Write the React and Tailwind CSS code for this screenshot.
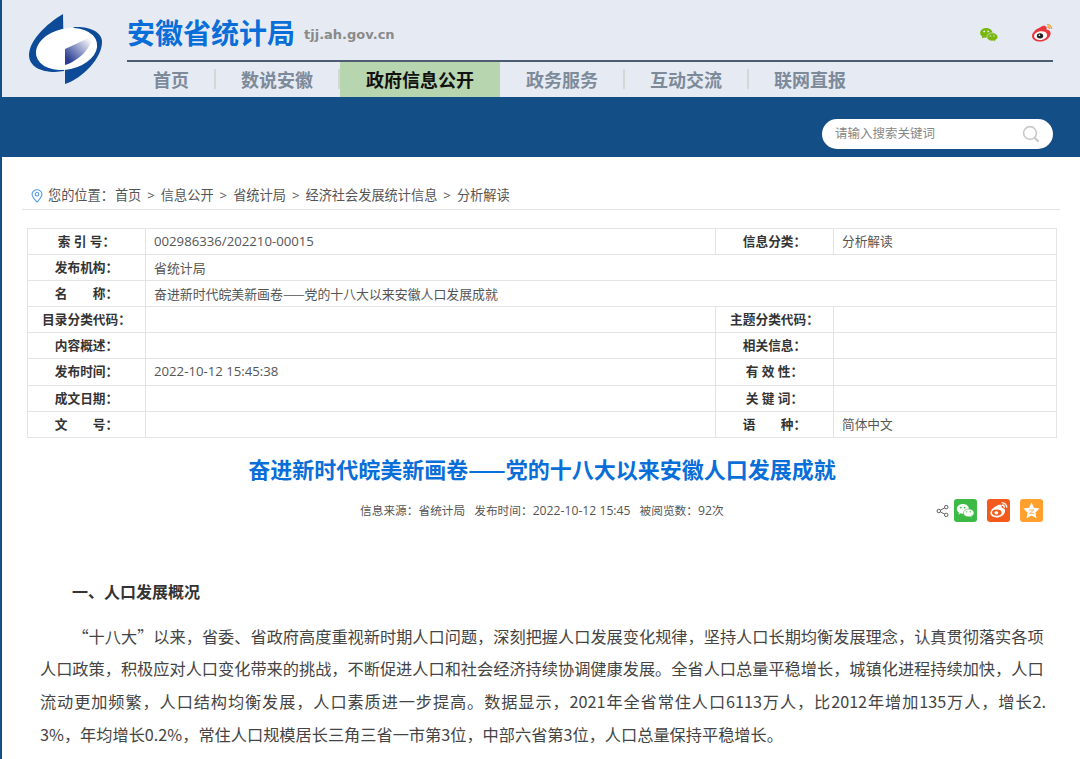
const sans = "font-['Open_Sans','Noto_Sans_CJK_SC',sans-serif]";

function Logo() {
  return (
    <svg width="76" height="72" viewBox="0 0 76 72" className="block">
      <defs>
        <linearGradient id="fold" x1="1" y1="0" x2="0" y2="1">
          <stop offset="0.1" stopColor="#ffffff" />
          <stop offset="0.85" stopColor="#2c3f93" />
        </linearGradient>
      </defs>
      <path d="M35 1 C18 11 1 28 1 42 C1 53 12 59 27 59 L36 58 Z" fill="#0d4a97" />
      <path d="M37 71 C55 65 74 45 74 29 C74 18 60 13 46 14 L37 30 Z" fill="#0d4a97" />
      <ellipse cx="38.5" cy="36" rx="31" ry="20.5" transform="rotate(-12 38.5 36)" fill="#ffffff" />
      <path d="M37 36 L65 23 C63 36 50 48 37 52 Z" fill="url(#fold)" />
    </svg>
  );
}

function WechatIcon({ bubble = "#78b70c", eye = "#e6ebf3", className }) {
  return (
    <svg viewBox="0 0 22 18" className={className}>
      <path d="M8 1 C3.8 1 1 3.6 1 6.6 C1 8.4 2 9.8 3.4 10.8 L3 13 L5.4 11.7 C6.2 12 7 12.1 8 12.1 C12 12.1 15 9.6 15 6.6 C15 3.6 12 1 8 1 Z" fill={bubble} />
      <path d="M14.6 6.6 C11.2 6.6 8.6 8.8 8.6 11.3 C8.6 13.8 11.2 15.8 14.6 15.8 C15.2 15.8 15.8 15.7 16.4 15.5 L18.4 17 L18 14.8 C19.8 13.9 21 12.7 21 11.3 C21 8.8 18 6.6 14.6 6.6 Z" fill={bubble} stroke={eye} strokeWidth="0.7" />
      <circle cx="5.6" cy="5" r="1" fill={eye} />
      <circle cx="10" cy="5" r="1" fill={eye} />
      <circle cx="12.6" cy="10" r="0.8" fill={eye} />
      <circle cx="16.6" cy="10" r="0.8" fill={eye} />
    </svg>
  );
}

function WeiboIcon() {
  return (
    <svg viewBox="0 0 22 20" className="w-[22px] h-5">
      <path d="M9 4.5 C12 2 15 2.6 15.6 4.6 C15.8 5.4 15.6 6 15.4 6.6 C18 6.8 20 8.4 19.6 11 C19 15.4 14 18.6 9 18.6 C4.4 18.6 1 16.4 1 13 C1 10 4.6 6 9 4.5 Z" fill="#e8383d" />
      <ellipse cx="9.6" cy="12.6" rx="6.6" ry="4.4" transform="rotate(-8 9.6 12.6)" fill="#ffffff" />
      <ellipse cx="9" cy="12.8" rx="3.2" ry="2.6" fill="#222222" />
      <circle cx="8.4" cy="12.2" r="0.8" fill="#ffffff" />
      <path d="M16 1.4 C18.4 1.4 20.6 3.4 20.6 6 M16.4 3.8 C17.6 3.8 18.4 4.8 18.4 6" fill="none" stroke="#f2a33c" strokeWidth="1.5" />
    </svg>
  );
}

function SearchIcon() {
  return (
    <svg viewBox="0 0 18 18" className="w-[18px] h-[18px]" fill="none" stroke="#c9c9c9" strokeWidth="1.6">
      <circle cx="8" cy="8" r="6.4" />
      <path d="M12.6 12.8 L16.6 16.6" strokeWidth="2.2" />
    </svg>
  );
}

function PinIcon() {
  return (
    <svg viewBox="0 0 14 16" className="w-3 h-[14px] shrink-0" fill="none" stroke="#4a9be8" strokeWidth="1.2">
      <path d="M7 15 C4 11.6 1.2 9 1.2 6 C1.2 3 3.8 0.8 7 0.8 C10.2 0.8 12.8 3 12.8 6 C12.8 9 10 11.6 7 15 Z" />
      <circle cx="7" cy="6" r="2.1" />
    </svg>
  );
}

function ShareIcon() {
  return (
    <svg viewBox="0 0 14 14" className="w-[13px] h-[14px]" fill="none" stroke="#555555" strokeWidth="1">
      <circle cx="3" cy="7" r="1.9" />
      <circle cx="11" cy="2.8" r="1.9" />
      <circle cx="11" cy="11.2" r="1.9" />
      <path d="M4.7 6.1 L9.3 3.7 M4.7 7.9 L9.3 10.3" />
    </svg>
  );
}

function WeiboTile() {
  return (
    <svg viewBox="0 0 23 23" className="w-[23px] h-[23px]">
      <path d="M9.5 7 C12 5 14.6 5.4 14.8 7.2 C14.9 7.8 14.8 8.2 14.6 8.7 C16.8 8.9 18.4 10.2 18 12.4 C17.5 15.8 13.6 18.4 9.6 18.4 C6 18.4 3.4 16.6 3.4 14 C3.4 11.6 6 8.4 9.5 7 Z" fill="#ffffff" />
      <ellipse cx="9.8" cy="13.6" rx="4.8" ry="3.2" fill="#f25b1c" />
      <ellipse cx="9.4" cy="13.8" rx="2" ry="1.6" fill="#ffffff" />
      <path d="M14.6 3.6 C17.4 3.6 19.8 5.8 19.8 8.8 M14.8 6 C16.2 6 17.4 7.2 17.4 8.8" fill="none" stroke="#ffffff" strokeWidth="1.3" />
    </svg>
  );
}

function StarTile() {
  return (
    <svg viewBox="0 0 23 23" className="w-[23px] h-[23px]">
      <path d="M11.5 3.6 L14 8.8 L19.6 9.6 L15.5 13.5 L16.5 19.2 L11.5 16.5 L6.5 19.2 L7.5 13.5 L3.4 9.6 L9 8.8 Z" fill="#ffffff" />
      <path d="M9 11 L14 11 L9.4 14.6 L14.2 14.6" fill="none" stroke="#ffb866" strokeWidth="1" />
    </svg>
  );
}

function Sep() {
  return <span className="ml-[25px] mb-0.5 h-5 w-0.5 bg-[#d4d6d8] shrink-0" />;
}

function Nav() {
  return (
    <div className="flex h-[35px] items-center text-lg font-bold text-[#7c8a9a]">
      <span className="ml-[26px]">首页</span>
      <Sep />
      <span className="ml-[25px]">数说安徽</span>
      <Sep />
      <div className="flex h-full w-[160px] items-center justify-center bg-[#b7d5ae] text-[#111111]">政府信息公开</div>
      <span className="ml-[26px]">政务服务</span>
      <Sep />
      <span className="ml-[25px]">互动交流</span>
      <Sep />
      <span className="ml-[25px]">联网直报</span>
    </div>
  );
}

function Header() {
  return (
    <div className="h-[97px] bg-[#e6ebf3] flex">
      <div className="w-[125px] pt-[13px] pl-[26px] shrink-0">
        <Logo />
      </div>
      <div className="w-[926px] shrink-0">
        <div className="flex h-[62px] border-b-2 border-[#4d5c70]">
          <div className="flex flex-1 items-center pt-[5px]">
            <span className="text-[28px] font-bold text-[#0a6ed8] leading-none">安徽省统计局</span>
            <span className="ml-[9px] mt-1 text-[13px] font-bold text-[#8a8a8a] font-['DejaVu_Sans',sans-serif]">tjj.ah.gov.cn</span>
          </div>
          <div className="flex items-start">
            <WechatIcon className="w-5 h-4 mt-[27px]" />
            <span className="w-8" />
            <div className="mt-[23px]">
              <WeiboIcon />
            </div>
          </div>
        </div>
        <Nav />
      </div>
    </div>
  );
}

function Banner() {
  return (
    <div className="h-[60px] bg-[#134e87] flex items-start justify-end pt-[22px] pr-[27px]">
      <div className="w-[231px] h-[30px] rounded-full bg-white flex items-center justify-between pl-[13px] pr-[13px]">
        <span className="text-[12.5px] text-[#888888]">请输入搜索关键词</span>
        <SearchIcon />
      </div>
    </div>
  );
}

function Breadcrumb() {
  const items = ["首页", "信息公开", "省统计局", "经济社会发展统计信息", "分析解读"];
  return (
    <div className="ml-[20px] mt-[28px] h-[25px] w-[1038px] border-b border-[#e3e3e3] pb-[3px] pl-[9px] flex items-center text-[13.2px] text-[#555555]">
      <PinIcon />
      <span className="ml-[5px] mr-[1px]">您的位置：</span>
      <div className="flex gap-[6px]">
        {items.map((item, i) => (
          <div key={item} className="flex gap-[6px]">
            {i > 0 && <span>&gt;</span>}
            <span>{item}</span>
          </div>
        ))}
      </div>
    </div>
  );
}

const rows = [
  ["索 引 号：", "002986336/202210-00015", "信息分类：", "分析解读"],
  ["发布机构：", "省统计局"],
  ["名　　称：", "奋进新时代皖美新画卷——党的十八大以来安徽人口发展成就"],
  ["目录分类代码：", "", "主题分类代码：", ""],
  ["内容概述：", "", "相关信息：", ""],
  ["发布时间：", "2022-10-12 15:45:38", "有 效 性：", ""],
  ["成文日期：", "", "关 键 词：", ""],
  ["文　　号：", "", "语　　种：", "简体中文"],
];

function valueClass(text) {
  if (/^\d/.test(text)) return "border border-[#e4e4e4] pl-2 text-[13.2px]";
  return "border border-[#e4e4e4] pl-2 text-[12.9px] font-['Noto_Sans_CJK_SC',sans-serif]";
}

function InfoTable() {
  return (
    <table className="w-[1030px] ml-[25px] border-collapse table-fixed text-[12.7px] text-[#555555]">
      <colgroup>
        <col className="w-[118px]" />
        <col className="w-[570px]" />
        <col className="w-[118px]" />
        <col />
      </colgroup>
      <tbody>
        {rows.map((r, i) => (
          <tr key={i} className="h-[26.1px]">
            <td className="border border-[#e4e4e4] text-center font-bold text-[#333333]">{r[0]}</td>
            <td colSpan={r.length === 2 ? 3 : 1} className={valueClass(r[1])}>{r[1]}</td>
            {r.length > 2 && <td className="border border-[#e4e4e4] text-center font-bold text-[#333333]">{r[2]}</td>}
            {r.length > 2 && <td className="border border-[#e4e4e4] pl-2">{r[3]}</td>}
          </tr>
        ))}
      </tbody>
    </table>
  );
}

function Meta() {
  return (
    <div className="mt-[17px] flex h-6 items-center justify-between pl-[358px] pr-[37px]">
      <div className="flex text-[11.7px] text-[#555555]">
        <span>信息来源：省统计局</span>
        <span className="ml-[9px]">发布时间：<span className="text-[12.2px]">2022-10-12 15:45</span></span>
        <span className="ml-[9px]">被阅览数：<span className="text-[12.2px]">92</span>次</span>
      </div>
      <div className="flex items-center gap-2.5">
        <div className="-mr-[5px]">
          <ShareIcon />
        </div>
        <div className="w-[23px] h-[23px] rounded-[3px] bg-[#3cba45] flex items-center justify-center">
          <WechatIcon bubble="#ffffff" eye="#3cba45" className="w-[19px] h-4" />
        </div>
        <div className="w-[23px] h-[23px] rounded-[3px] bg-[#f25b1c]">
          <WeiboTile />
        </div>
        <div className="w-[23px] h-[23px] rounded-[3px] bg-[#ff9f2e]">
          <StarTile />
        </div>
      </div>
    </div>
  );
}

function Article() {
  return (
    <div>
      <h1 className="mt-[16px] text-center text-[22px] font-bold text-[#0a6ed8] leading-[28px] pl-[2px] font-['Noto_Sans_CJK_SC',sans-serif]">奋进新时代皖美新画卷——党的十八大以来安徽人口发展成就</h1>
      <Meta />
      <h2 className="mt-[57px] ml-[70px] text-base font-bold text-[#333333] leading-6">一、人口发展概况</h2>
      <div className="mt-[16px] ml-[38px] w-[1006px] text-[16.2px] leading-[32.7px] text-[#444444] font-['Noto_Sans_CJK_SC',sans-serif]">
        <p className="indent-[2em] break-all [text-align-last:justify]">
          “十八大”以来，省委、省政府高度重视新时期人口问题，深刻把握人口发展变化规律，坚持人口长期均衡发展理念，认真贯彻落实各项人口政策，积极应对人口变化带来的挑战，不断促进人口和社会经济持续协调健康发展。全省人口总量平稳增长，城镇化进程持续加快，人口流动更加频繁，人口结构均衡发展，人口素质进一步提高。数据显示，2021年全省常住人口6113万人，比2012年增加135万人，增长2.
        </p>
        <p>3%，年均增长0.2%，常住人口规模居长三角三省一市第3位，中部六省第3位，人口总量保持平稳增长。</p>
      </div>
    </div>
  );
}

export default function App() {
  return (
    <div className={`${sans} w-[1080px] h-[759px] overflow-hidden bg-white border-l-2 border-[#134e87]`}>
      <Header />
      <Banner />
      <Breadcrumb />
      <div className="mt-[18px]">
        <InfoTable />
      </div>
      <Article />
    </div>
  );
}
